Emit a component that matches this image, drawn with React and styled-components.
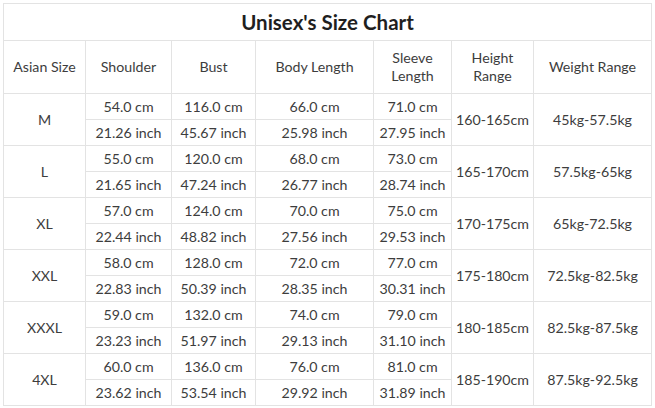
import React from 'react';
import styled, { createGlobalStyle } from 'styled-components';

const GlobalStyle = createGlobalStyle`
  html, body {
    margin: 0;
    padding: 0;
    background: #ffffff;
  }
  body {
    font-family: Lato, "Open Sans", sans-serif;
  }
`;

const Page = styled.div`
  padding: 3px 4px 3px 3px;
`;

const Table = styled.table`
  width: 648px;
  table-layout: fixed;
  border-collapse: collapse;
  color: #3d3d3d;
  font-size: 14.2px;
`;

const TitleCell = styled.th`
  height: 36px;
  border: 1px solid #e3e3e3;
  font-size: 20.5px;
  font-weight: 700;
  color: #1f1f1f;
  text-align: center;
  padding: 0;
`;

const HeadCell = styled.th`
  height: 52px;
  border: 1px solid #e3e3e3;
  font-weight: 400;
  line-height: 18px;
  text-align: center;
  padding: 0 2px;
`;

const Cell = styled.td`
  height: 25px;
  border: 1px solid #e3e3e3;
  text-align: center;
  padding: 0;
  white-space: nowrap;
`;

const cols = [82, 86, 84, 118, 78, 82, 118];

const sizes = [
  { size: 'M', cm: ['54.0', '116.0', '66.0', '71.0'], inch: ['21.26', '45.67', '25.98', '27.95'], height: '160-165cm', weight: '45kg-57.5kg' },
  { size: 'L', cm: ['55.0', '120.0', '68.0', '73.0'], inch: ['21.65', '47.24', '26.77', '28.74'], height: '165-170cm', weight: '57.5kg-65kg' },
  { size: 'XL', cm: ['57.0', '124.0', '70.0', '75.0'], inch: ['22.44', '48.82', '27.56', '29.53'], height: '170-175cm', weight: '65kg-72.5kg' },
  { size: 'XXL', cm: ['58.0', '128.0', '72.0', '77.0'], inch: ['22.83', '50.39', '28.35', '30.31'], height: '175-180cm', weight: '72.5kg-82.5kg' },
  { size: 'XXXL', cm: ['59.0', '132.0', '74.0', '79.0'], inch: ['23.23', '51.97', '29.13', '31.10'], height: '180-185cm', weight: '82.5kg-87.5kg' },
  { size: '4XL', cm: ['60.0', '136.0', '76.0', '81.0'], inch: ['23.62', '53.54', '29.92', '31.89'], height: '185-190cm', weight: '87.5kg-92.5kg' },
];

const SizeChart = () => (
  <Table>
    <colgroup>
      {cols.map((w, i) => <col key={i} style={{ width: w }} />)}
    </colgroup>
    <thead>
      <tr>
        <TitleCell colSpan={7}>Unisex's Size Chart</TitleCell>
      </tr>
      <tr>
        <HeadCell>Asian Size</HeadCell>
        <HeadCell>Shoulder</HeadCell>
        <HeadCell>Bust</HeadCell>
        <HeadCell>Body Length</HeadCell>
        <HeadCell>Sleeve<br />Length</HeadCell>
        <HeadCell>Height<br />Range</HeadCell>
        <HeadCell>Weight Range</HeadCell>
      </tr>
    </thead>
    <tbody>
      {sizes.map(row => (
        <React.Fragment key={row.size}>
          <tr>
            <Cell rowSpan={2}>{row.size}</Cell>
            {row.cm.map((v, i) => <Cell key={i}>{v} cm</Cell>)}
            <Cell rowSpan={2}>{row.height}</Cell>
            <Cell rowSpan={2}>{row.weight}</Cell>
          </tr>
          <tr>
            {row.inch.map((v, i) => <Cell key={i}>{v} inch</Cell>)}
          </tr>
        </React.Fragment>
      ))}
    </tbody>
  </Table>
);

export default function App() {
  return (
    <Page>
      <GlobalStyle />
      <SizeChart />
    </Page>
  );
}
